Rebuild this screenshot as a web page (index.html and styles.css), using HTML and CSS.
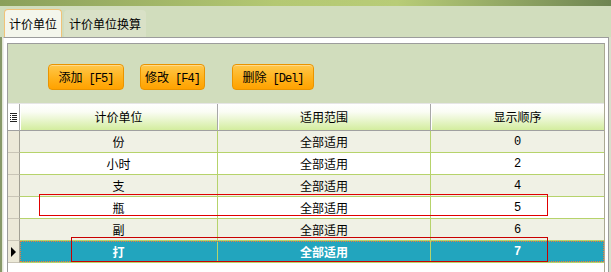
FILE: index.html
```html
<!DOCTYPE html>
<html lang="zh-CN">
<head>
  <meta charset="UTF-8" />
  <title>计价单位</title>
  <link rel="stylesheet" href="styles.css">
</head>
<body>
  <div class="topbar"></div>

  <div class="tabs">
    <div class="tab active">计价单位</div>
    <div class="tab">计价单位换算</div>
  </div>

  <div class="panel">
    <div class="inner">
      <div class="toolbar">
        <button class="btn btn-add">添加<span class="key">[F5]</span></button>
        <button class="btn btn-edit">修改<span class="key">[F4]</span></button>
        <button class="btn btn-del">删除<span class="key">[Del]</span></button>
      </div>

      <div class="grid">
        <div class="row head">
          <div class="cell ind">
            <svg width="7" height="9" viewBox="0 0 7 9"><path d="M0 0h7v1H0zM0 2h1v1H0zM2 2h5v1H2zM0 4h1v1H0zM2 4h5v1H2zM0 6h1v1H0zM2 6h5v1H2zM0 8h7v1H0z" fill="#222"/></svg>
          </div>
          <div class="cell">计价单位</div>
          <div class="cell">适用范围</div>
          <div class="cell last">显示顺序</div>
        </div>

        <div class="row odd">
          <div class="cell ind"></div>
          <div class="cell">份</div>
          <div class="cell">全部适用</div>
          <div class="cell num last">0</div>
        </div>
        <div class="row">
          <div class="cell ind"></div>
          <div class="cell">小时</div>
          <div class="cell">全部适用</div>
          <div class="cell num last">2</div>
        </div>
        <div class="row odd">
          <div class="cell ind"></div>
          <div class="cell">支</div>
          <div class="cell">全部适用</div>
          <div class="cell num last">4</div>
        </div>
        <div class="row">
          <div class="cell ind"></div>
          <div class="cell">瓶</div>
          <div class="cell">全部适用</div>
          <div class="cell num last">5</div>
        </div>
        <div class="row odd">
          <div class="cell ind"></div>
          <div class="cell">副</div>
          <div class="cell">全部适用</div>
          <div class="cell num last">6</div>
        </div>
        <div class="row sel">
          <div class="cell ind">
            <svg width="6" height="10" viewBox="0 0 6 10"><path d="M0 0L5 5L0 10z" fill="#000"/></svg>
          </div>
          <div class="cell">打</div>
          <div class="cell">全部适用</div>
          <div class="cell num last">7</div>
        </div>
      </div>
    </div>
  </div>

  <!-- annotation boxes drawn over the grid -->
  <div class="mark mark-one"></div>
  <div class="mark mark-two"></div>
</body>
</html>
```

FILE: styles.css
```css
body {
  margin: 0;
  width: 611px;
  height: 272px;
  overflow: hidden;
  position: relative;
  font-family: "Noto Sans CJK SC", "Liberation Sans", sans-serif;
  font-size: 12px;
  color: #000;
  background: linear-gradient(to right, #879869 0, #879869 2px, #e2e7d6 2px, #e2e7d6 3px, #d8dfcb 3px);
}
.topbar {
  height: 6px;
  background: linear-gradient(to right, #8a9f5a, #b4c873 45%, #b8cc77 65%, #6e8452);
}
.tabs {
  height: 31px;
  background: #d1ddbd;
  display: flex;
  align-items: flex-end;
  padding-left: 4px;
  gap: 2px;
}
.tab {
  box-sizing: border-box;
  height: 27px;
  width: 82px;
  line-height: 27px;
  text-align: center;
  background: #d9e1c7;
  border-radius: 4px 4px 0 0;
}
.tab.active {
  height: 28px;
  width: 58px;
  line-height: 27px;
  background: #f4f6ec;
  border: 1px solid #f0c278;
  border-bottom: none;
}
.panel {
  box-sizing: border-box;
  width: 606px;
  height: 235px;
  margin-left: 3px;
  padding: 5px 3px 0 3px;
  background: #fff;
  border-top: 1px solid #9c9c9c;
  border-right: 1px solid #9c9c9c;
  border-left: 1px solid #eeeeee;
}
.inner {
  box-sizing: border-box;
  width: 598px;
  height: 229px;
  border-top: 1px solid #9c9c9c;
  border-left: 1px solid #9c9c9c;
  border-right: 1px solid #aaa892;
  background: #fff;
}
.toolbar {
  box-sizing: border-box;
  height: 59px;
  padding: 20px 0 0 40px;
  background: #d1ddbd;
  display: flex;
  align-items: flex-start;
}
.btn {
  box-sizing: border-box;
  height: 26px;
  padding: 0;
  font-family: "Noto Sans CJK SC", sans-serif;
  font-size: 12px;
  color: #000;
  background: linear-gradient(#ffc84c, #ffb21c 55%, #ffa200);
  border: 1px solid #ea9400;
  border-radius: 4px;
  box-shadow: inset 0 1px 0 #ffd98a;
}
.btn-add { width: 76px; margin-right: 16px; }
.btn-edit { width: 65px; margin-right: 27px; }
.btn-del { width: 82px; }
.key {
  font-family: "Liberation Mono", monospace;
  font-size: 12px;
  letter-spacing: -1px;
  margin-left: 6px;
}
.grid {
  border-top: 1px solid #e6e6e6;
}
.row {
  display: grid;
  grid-template-columns: 12px 198px 213px 173px;
  position: relative;
}
.cell {
  box-sizing: border-box;
  height: 22px;
  line-height: 21px;
  text-align: center;
  border-right: 1px solid #b6d36b;
  border-bottom: 1px solid #b6d36b;
}
.cell.last {
  border-right: none;
}
.cell.num {
  font-family: "Liberation Mono", monospace;
  line-height: 23px;
}
.cell.ind {
  background: #ece9d8;
  border-right: 1px solid #a3a195;
  border-bottom: 1px solid #c9c5b6;
  display: flex;
  align-items: center;
  justify-content: center;
}
.row.odd .cell {
  background: #f0f1e5;
}
.row.odd .cell.ind {
  background: #ece9d8;
}
.row.head .cell {
  height: 27px;
  line-height: 26px;
  background: linear-gradient(#ffffff, #fbfdf5 30%, #d3ed9e);
  border-right: 1px solid #a8a8a8;
  border-bottom: 1px solid #a0a0a0;
  box-shadow: inset 1px 0 0 #ffffff;
}
.row.head .cell.ind {
  background: #fff;
  padding-top: 1px;
}
.row.head .cell.last {
  border-right: none;
}
.row.sel .cell {
  background: #22a5be;
  color: #fff;
  font-weight: bold;
}
.row.sel .cell.ind {
  background: #ece9d8;
  justify-content: flex-start;
  padding-left: 3px;
}
.row.sel::after {
  content: "";
  position: absolute;
  left: 12px;
  right: 0;
  top: 0;
  bottom: 1px;
  border: 1px dotted #ef7a38;
}
.mark {
  position: absolute;
  box-sizing: border-box;
  border: 1px solid #e00000;
}
.mark-one {
  left: 39px;
  top: 194px;
  width: 509px;
  height: 22px;
}
.mark-two {
  left: 71px;
  top: 237px;
  width: 477px;
  height: 25px;
  border-color: #c80000;
}
```
